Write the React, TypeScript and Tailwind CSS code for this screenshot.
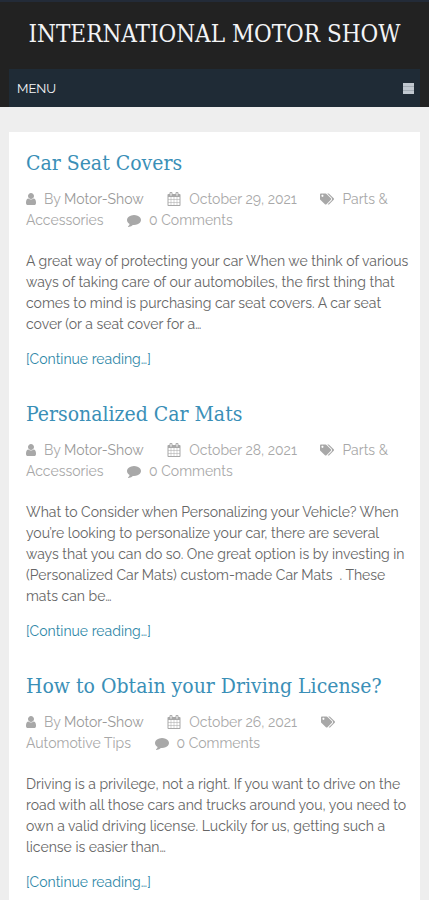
import React from 'react';
import { FaTags } from 'react-icons/fa';

const posts = [
  {
    title: 'Car Seat Covers',
    author: 'Motor-Show',
    date: 'October 29, 2021',
    category: 'Parts & Accessories',
    excerpt:
      'A great way of protecting your car When we think of various ways of taking care of our automobiles, the first thing that comes to mind is purchasing car seat covers. A car seat cover (or a seat cover for a…',
  },
  {
    title: 'Personalized Car Mats',
    author: 'Motor-Show',
    date: 'October 28, 2021',
    category: 'Parts & Accessories',
    excerpt:
      'What to Consider when Personalizing your Vehicle? When you’re looking to personalize your car, there are several ways that you can do so. One great option is by investing in (Personalized Car Mats) custom-made Car Mats\u00a0 . These mats can be…',
  },
  {
    title: 'How to Obtain your Driving License?',
    author: 'Motor-Show',
    date: 'October 26, 2021',
    category: 'Automotive Tips',
    excerpt:
      'Driving is a privilege, not a right. If you want to drive on the road with all those cars and trucks around you, you need to own a valid driving license. Luckily for us, getting such a license is easier than…',
  },
];

function UserIcon() {
  return (
    <svg viewBox="256 0 1280 1792" className="mr-2 inline-block h-[14px] w-[10px] align-[-2px]" fill="currentColor" aria-hidden="true">
      <path d="M1536 1399q0 109-62.5 187t-150.5 78h-854q-88 0-150.5-78t-62.5-187q0-85 8.5-160.5t31.5-152 58.5-131 94-89 134.5-34.5q131 128 313 128t313-128q76 0 134.5 34.5t94 89 58.5 131 31.5 152 8.5 160.5zm-256-887q0 159-112.5 271.5t-271.5 112.5-271.5-112.5-112.5-271.5 112.5-271.5 271.5-112.5 271.5 112.5 112.5 271.5z" />
    </svg>
  );
}

function CalendarIcon() {
  return (
    <svg viewBox="0 0 1792 1792" className="mr-2 inline-block size-[14px] align-[-2px]" fill="currentColor" aria-hidden="true">
      <path d="M192 1664h288v-288h-288v288zm352 0h320v-288h-320v288zm-352-352h288v-320h-288v320zm352 0h320v-320h-320v320zm-352-384h288v-288h-288v288zm736 736h320v-288h-320v288zm-384-736h320v-288h-320v288zm768 736h288v-288h-288v288zm-384-352h320v-320h-320v320zm-352-864v-288q0-13-9.5-22.5t-22.5-9.5h-64q-13 0-22.5 9.5t-9.5 22.5v288q0 13 9.5 22.5t22.5 9.5h64q13 0 22.5-9.5t9.5-22.5zm736 864h288v-320h-288v320zm-384-384h320v-288h-320v288zm384 0h288v-288h-288v288zm32-480v-288q0-13-9.5-22.5t-22.5-9.5h-64q-13 0-22.5 9.5t-9.5 22.5v288q0 13 9.5 22.5t22.5 9.5h64q13 0 22.5-9.5t9.5-22.5zm384-64v1280q0 52-38 90t-90 38h-1408q-52 0-90-38t-38-90v-1280q0-52 38-90t90-38h128v-96q0-66 47-113t113-47h64q66 0 113 47t47 113v96h384v-96q0-66 47-113t113-47h64q66 0 113 47t47 113v96h128q52 0 90 38t38 90z" />
    </svg>
  );
}

function CommentIcon() {
  return (
    <svg viewBox="0 0 1792 1792" className="mr-2 inline-block size-[14px] align-[-2px]" fill="currentColor" aria-hidden="true">
      <path d="M1792 896q0 174-120 321.5t-326 233-450 85.5q-70 0-145-8-198 175-460 242-49 14-114 22-17 2-30.5-9t-17.5-29v-1q-3-4-.5-12t2-10 4.5-9.5l6-9 7-8.5 8-9q7-8 31-34.5t34.5-38 31-39.5 32.5-51 27-59 26-76q-157-89-247.5-220t-90.5-281q0-130 71-248.5t191-204.5 286-136.5 348-50.5q244 0 450 85.5t326 233 120 321.5z" />
    </svg>
  );
}

function Header() {
  return (
    <header className="border-t-2 border-[#232b38] bg-[#222222] px-[9px]">
      <h1 className="pt-4 pb-[19px] text-center font-['Roboto_Slab','DejaVu_Serif_Condensed','DejaVu_Serif',serif] text-[24px] leading-8 text-gray-100 uppercase">
        <a href="#">International Motor Show</a>
      </h1>
      <button type="button" className="flex h-[38px] w-full items-center justify-between bg-[#1f2b36] pr-[6px] pl-2 text-[13px] text-gray-100 uppercase">
        Menu
        <svg viewBox="0 0 11 11" className="size-[11px]" aria-hidden="true">
          <path d="M0 0h11v11H0z" fill="#c0c8d0" />
          <path d="M0 3h11v1H0zM0 7h11v1H0z" fill="#a3acb5" />
        </svg>
      </button>
    </header>
  );
}

function Post({ post }: { post: (typeof posts)[number] }) {
  return (
    <article>
      <h2 className="font-['Roboto_Slab','DejaVu_Serif_Condensed','DejaVu_Serif',serif] text-[21px] leading-7 text-[#3a8fb7]">
        <a href="#">{post.title}</a>
      </h2>
      <div className="mt-3 text-[#a8a8a8]">
        <span className="mr-5">
          <UserIcon />
          By <a href="#" className="text-[#999999]">{post.author}</a>
        </span>{' '}
        <span className="mr-5">
          <CalendarIcon />
          {post.date}
        </span>{' '}
        <span className="mr-5">
          <FaTags className="mr-2 inline-block size-[14px] align-[-2px]" />
          <a href="#">{post.category}</a>
        </span>{' '}
        <span className="whitespace-nowrap">
          <CommentIcon />
          <a href="#">0 Comments</a>
        </span>
      </div>
      <p className="mt-5 text-[#666666]">{post.excerpt}</p>
      <a href="#" className="mt-[14px] block text-[#2f88a8]">
        [Continue reading…]
      </a>
    </article>
  );
}

export default function App() {
  return (
    <div className="flex min-h-screen flex-col bg-[#eeeeee] font-['Raleway','Lato',sans-serif] text-[14px] leading-[21px]">
      <Header />
      <main className="mx-[9px] mt-[25px] flex grow flex-col gap-[30px] bg-white pt-[17px] pr-[11px] pl-[17px]">
        {posts.map((post) => (
          <Post key={post.title} post={post} />
        ))}
      </main>
    </div>
  );
}
